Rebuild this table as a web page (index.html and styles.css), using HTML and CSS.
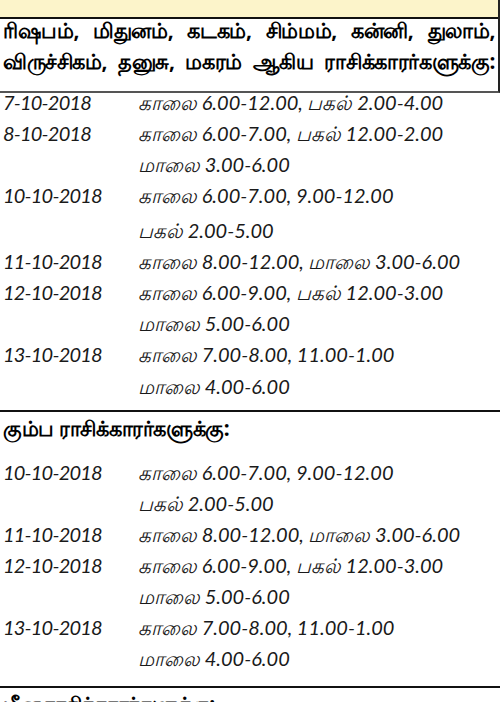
FILE: index.html
```html
<!DOCTYPE html>
<html lang="ta">
<head>
<meta charset="utf-8">
<title>ராசி நேரங்கள்</title>
<link rel="stylesheet" href="styles.css">
</head>
<body>
<div class="band"></div>
<section class="group first">
  <div class="head">
    <div class="hl">ரிஷபம், மிதுனம், கடகம், சிம்மம், கன்னி, துலாம்,</div>
    <div class="hl">விருச்சிகம், தனுசு, மகரம் ஆகிய ராசிக்காரர்களுக்கு:</div>
  </div>
  <div class="rows">
    <div class="row"><div class="date">7-10-2018</div><div class="times"><div>காலை 6.00-12.00, பகல் 2.00-4.00</div></div></div>
    <div class="row"><div class="date">8-10-2018</div><div class="times"><div>காலை 6.00-7.00, பகல் 12.00-2.00</div><div>மாலை 3.00-6.00</div></div></div>
    <div class="row"><div class="date">10-10-2018</div><div class="times"><div>காலை 6.00-7.00, 9.00-12.00</div><div class="sp">பகல் 2.00-5.00</div></div></div>
    <div class="row"><div class="date">11-10-2018</div><div class="times"><div>காலை 8.00-12.00, மாலை 3.00-6.00</div></div></div>
    <div class="row"><div class="date">12-10-2018</div><div class="times"><div>காலை 6.00-9.00, பகல் 12.00-3.00</div><div>மாலை 5.00-6.00</div></div></div>
    <div class="row"><div class="date">13-10-2018</div><div class="times"><div>காலை 7.00-8.00, 11.00-1.00</div><div class="sp2">மாலை 4.00-6.00</div></div></div>
  </div>
</section>
<section class="group second">
  <div class="head single">
    <div class="hl left">கும்ப ராசிக்காரர்களுக்கு:</div>
  </div>
  <div class="rows">
    <div class="row"><div class="date">10-10-2018</div><div class="times"><div>காலை 6.00-7.00, 9.00-12.00</div><div>பகல் 2.00-5.00</div></div></div>
    <div class="row"><div class="date">11-10-2018</div><div class="times"><div>காலை 8.00-12.00, மாலை 3.00-6.00</div></div></div>
    <div class="row"><div class="date">12-10-2018</div><div class="times"><div>காலை 6.00-9.00, பகல் 12.00-3.00</div><div>மாலை 5.00-6.00</div></div></div>
    <div class="row"><div class="date">13-10-2018</div><div class="times"><div>காலை 7.00-8.00, 11.00-1.00</div><div>மாலை 4.00-6.00</div></div></div>
  </div>
</section>
<section class="group third">
  <div class="head single">
    <div class="hl left">மீன ராசிக்காரர்களுக்கு:</div>
  </div>
</section>
</body>
</html>
```
FILE: styles.css
```css
html, body {
  margin: 0;
  padding: 0;
  background: #ffffff;
}
body {
  width: 500px;
  height: 702px;
  overflow: hidden;
  color: #1a1a1a;
  font-family: "Noto Sans", "Lato", sans-serif;
}
.band {
  height: 17px;
  background: #fcf4ca;
  box-sizing: border-box;
  border-right: 2px solid #222;
}
.group {
  border-top: 2px solid #111;
}
.head {
  padding: 0 3px;
}
.first .head {
  border-right: 2px solid #222;
  border-bottom: 2px solid #555;
  padding-bottom: 14px;
}
.first .head .hl:first-child {
  margin-top: -4px;
}
.head.single {
  padding-top: 1px;
}
.hl {
  font-weight: 700;
  font-size: 21px;
  letter-spacing: -0.4px;
  line-height: 31px;
  white-space: nowrap;
  text-align: justify;
  text-align-last: justify;
  color: #000;
}
.hl.left {
  text-align: left;
  text-align-last: left;
}
.first .rows {
  margin-top: -6px;
  padding-bottom: 8px;
}
.second .rows {
  padding-top: 13px;
  padding-bottom: 12px;
}
.row {
  display: grid;
  grid-template-columns: 138px 1fr;
}
.date {
  padding-left: 3px;
  font-family: "Lato", sans-serif;
  font-style: italic;
  font-size: 20px;
  letter-spacing: -0.8px;
  line-height: 31px;
}
.times {
  font-family: "Lato", "Noto Sans", sans-serif;
  font-style: italic;
  font-size: 20px;
  line-height: 31px;
}
.sp {
  padding-top: 4px;
}
.sp2 {
  padding-top: 1px;
}
```
